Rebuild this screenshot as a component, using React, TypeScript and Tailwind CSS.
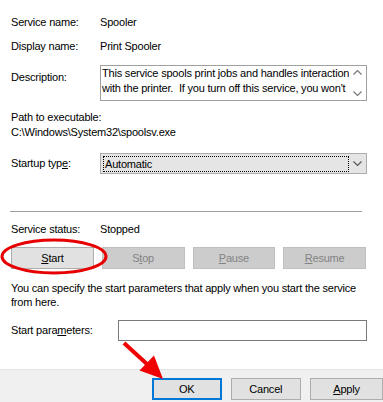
import React from "react";

const font = { fontFamily: '"Liberation Sans", Arial, sans-serif' };

const U = ({ children }: { children: React.ReactNode }) => (
  <span className="underline underline-offset-[1px]">{children}</span>
);

const ActionButton = ({
  children,
  disabled = false,
}: {
  children: React.ReactNode;
  disabled?: boolean;
}) => (
  <div
    className={`h-[22px] flex items-center justify-center border ${
      disabled
        ? "bg-[#cccccc] border-[#bfbfbf] text-[#838383]"
        : "bg-[#e1e1e1] border-[#adadad] text-black"
    }`}
  >
    {children}
  </div>
);

export default function App() {
  return (
    <div
      className="relative w-[383px] h-[402px] bg-white overflow-hidden text-[11px] leading-[15px] tracking-[-0.2px] text-black"
      style={font}
    >
      <div className="pl-[11px] pt-[15px]">
        <div className="flex">
          <span className="w-[89px]">Service name:</span>
          <span>Spooler</span>
        </div>
        <div className="flex mt-[9px]">
          <span className="w-[89px]">Display name:</span>
          <span>Print Spooler</span>
        </div>

        <div className="flex mt-[11px]">
          <span className="w-[89px] mt-[5px]">Description:</span>
          <div className="flex w-[267px] h-[36px] border border-[#a0a0a0]">
            <div className="flex-1 pl-[1px] pt-[0px] leading-[15px] overflow-hidden whitespace-nowrap">
              <div>This service spools print jobs and handles interaction</div>
              <div>with the printer.&nbsp; If you turn off this service, you won't</div>
            </div>
            <div className="w-[17px] flex flex-col items-center justify-between py-[4px]">
              <svg width="9" height="5" viewBox="0 0 9 5">
                <path d="M0.5 4.5 L4.5 0.5 L8.5 4.5" fill="none" stroke="#7a7a7a" strokeWidth="1.2" />
              </svg>
              <svg width="9" height="5" viewBox="0 0 9 5">
                <path d="M0.5 0.5 L4.5 4.5 L8.5 0.5" fill="none" stroke="#7a7a7a" strokeWidth="1.2" />
              </svg>
            </div>
          </div>
        </div>

        <div className="mt-[9px]">Path to executable:</div>
        <div>C:\Windows\System32\spoolsv.exe</div>

        <div className="flex items-center mt-[13px]">
          <span className="w-[89px]">
            Startup typ<U>e</U>:
          </span>
          <div className="flex items-center w-[267px] h-[21px] bg-[#e5e5e5] border border-[#acacac] pl-[2px]">
            <div className="w-[246px] h-[16px] border border-dotted border-black leading-[14px] pl-[1px]">
              Automatic
            </div>
            <div className="flex-1 flex justify-center">
              <svg width="9" height="5" viewBox="0 0 9 5">
                <path d="M0.5 0.5 L4.5 4.5 L8.5 0.5" fill="none" stroke="#555555" strokeWidth="1.1" />
              </svg>
            </div>
          </div>
        </div>

        <div className="w-[352px] h-px bg-[#a0a0a0] mt-[37px] -ml-px" />

        <div className="flex mt-[10px]">
          <span className="w-[89px]">Service status:</span>
          <span>Stopped</span>
        </div>

        <div className="grid grid-cols-4 gap-[8px] w-[355px] mt-[10px]">
          <ActionButton>
            <U>S</U>tart
          </ActionButton>
          <ActionButton disabled>
            S<U>t</U>op
          </ActionButton>
          <ActionButton disabled>
            <U>P</U>ause
          </ActionButton>
          <ActionButton disabled>
            <U>R</U>esume
          </ActionButton>
        </div>

        <div className="mt-[12px] leading-[14px] w-[360px]">
          You can specify the start parameters that apply when you start the service from here.
        </div>

        <div className="flex items-center mt-[11px]">
          <span className="w-[107px]">
            Start para<U>m</U>eters:
          </span>
          <div className="w-[249px] h-[21px] border border-[#7a7a7a] bg-white" />
        </div>
      </div>

      <div className="mt-[28px] h-[40px] bg-[#f0f0f0] border-t border-[#e3e3e3] flex gap-[9px] pl-[152px] pt-[8px]">
        <div className="w-[72px] h-[22px] flex items-center justify-center bg-[#e1e1e1] border-2 border-[#0078d7]">
          OK
        </div>
        <div className="w-[73px] h-[22px] flex items-center justify-center bg-[#e1e1e1] border border-[#adadad]">
          Cancel
        </div>
        <div className="w-[73px] h-[22px] shrink-0 flex items-center justify-center bg-[#e1e1e1] border border-[#adadad]">
          <span>
            <U>A</U>pply
          </span>
        </div>
      </div>

      <svg
        className="absolute inset-0 pointer-events-none"
        width="383"
        height="402"
        viewBox="0 0 383 402"
      >
        <ellipse cx="54" cy="256.5" rx="52" ry="16.5" fill="none" stroke="#e60000" strokeWidth="3" />
        <line x1="124" y1="343" x2="148" y2="365" stroke="#f00000" strokeWidth="4" />
        <polygon points="163,379 139.5,370.5 154,355.5" fill="#f00000" />
      </svg>
    </div>
  );
}
